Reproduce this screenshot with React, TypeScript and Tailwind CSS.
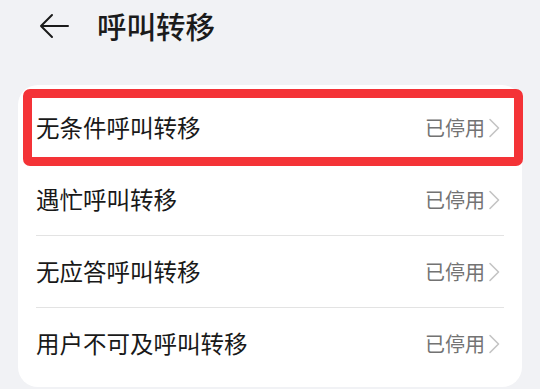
import React from "react";

const rows = ["无条件呼叫转移", "遇忙呼叫转移", "无应答呼叫转移", "用户不可及呼叫转移"];

export default function App() {
  return (
    <div
      className="w-[540px] h-[389px] bg-[#f1f2f5] overflow-hidden"
      style={{ fontFamily: '"Noto Sans CJK SC", "Noto Sans", sans-serif' }}
    >
      <div className="flex items-center h-[51px] pl-[38px]">
        <svg width="32" height="28" viewBox="0 0 32 28" className="text-[#1b1b1b]">
          <path d="M30 14 H3 M14 3 L3 14 L14 25" fill="none" stroke="currentColor" strokeWidth="2" strokeLinecap="round" strokeLinejoin="round" />
        </svg>
        <div className="ml-[27px] text-[29.5px] leading-none text-[#1b1b1b] font-medium">呼叫转移</div>
      </div>
      <div className="relative mt-[34px] ml-[18px] w-[504px] rounded-[20px] bg-white py-[7px]">
        {rows.map((r, i) => (
          <div key={r} className="h-[72px] flex flex-col">
            <div className="flex-1 flex items-center pl-[18px] pr-[21px]">
              <div className="flex-1 text-[23.5px] text-[#191919] leading-none">{r}</div>
              <div className="text-[20px] text-[#737373] leading-none">已停用</div>
              <svg width="14" height="22" viewBox="0 0 14 22" className="ml-[2px]">
                <path d="M3 2.5 L11.5 11 L3 19.5" fill="none" stroke="#c4c4c4" strokeWidth="1.6" strokeLinecap="round" strokeLinejoin="round" />
              </svg>
            </div>
            {i < rows.length - 1 && <div className="ml-[18px] mr-[18px] h-px bg-[#e3e3e3]" />}
          </div>
        ))}
        <div className="absolute left-[5px] top-[4px] w-[500px] h-[77px] border-[9px] border-[#f43337] rounded-[7px]" />
      </div>
    </div>
  );
}
